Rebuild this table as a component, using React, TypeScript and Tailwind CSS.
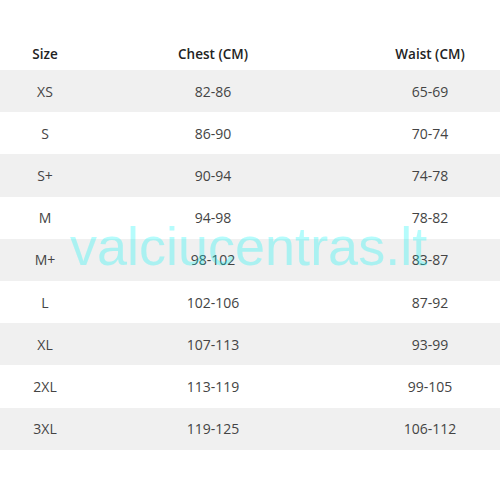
import React from 'react';

const rows = [
  ['XS', '82-86', '65-69'],
  ['S', '86-90', '70-74'],
  ['S+', '90-94', '74-78'],
  ['M', '94-98', '78-82'],
  ['M+', '98-102', '83-87'],
  ['L', '102-106', '87-92'],
  ['XL', '107-113', '93-99'],
  ['2XL', '113-119', '99-105'],
  ['3XL', '119-125', '106-112'],
];

export default function App() {
  return (
    <div className="relative w-[500px] h-[500px] bg-white overflow-hidden font-['Open_Sans',sans-serif]">
      <div className="pt-[38px]">
        <div className="grid grid-cols-[90px_246px_164px] h-[32px] items-center text-[13.5px] font-semibold text-[#222]">
          <div className="text-center">Size</div>
          <div className="text-center">Chest (CM)</div>
          <div className="text-center pl-[24px]">Waist (CM)</div>
        </div>
        {rows.map((r, i) => (
          <div
            key={r[0]}
            className={`grid grid-cols-[90px_246px_164px] h-[42.2px] items-center text-[14px] text-[#444] ${i % 2 === 0 ? 'bg-[#f0f0f0]' : 'bg-white'}`}
          >
            <div className="text-center">{r[0]}</div>
            <div className="text-center">{r[1]}</div>
            <div className="text-center pl-[24px]">{r[2]}</div>
          </div>
        ))}
      </div>
      <div className="absolute left-[70px] top-[219px] text-[54px] leading-none font-['Liberation_Sans',Arial,sans-serif] text-[rgba(0,245,245,0.29)] pointer-events-none whitespace-nowrap">
        valciucentras.lt
      </div>
    </div>
  );
}
